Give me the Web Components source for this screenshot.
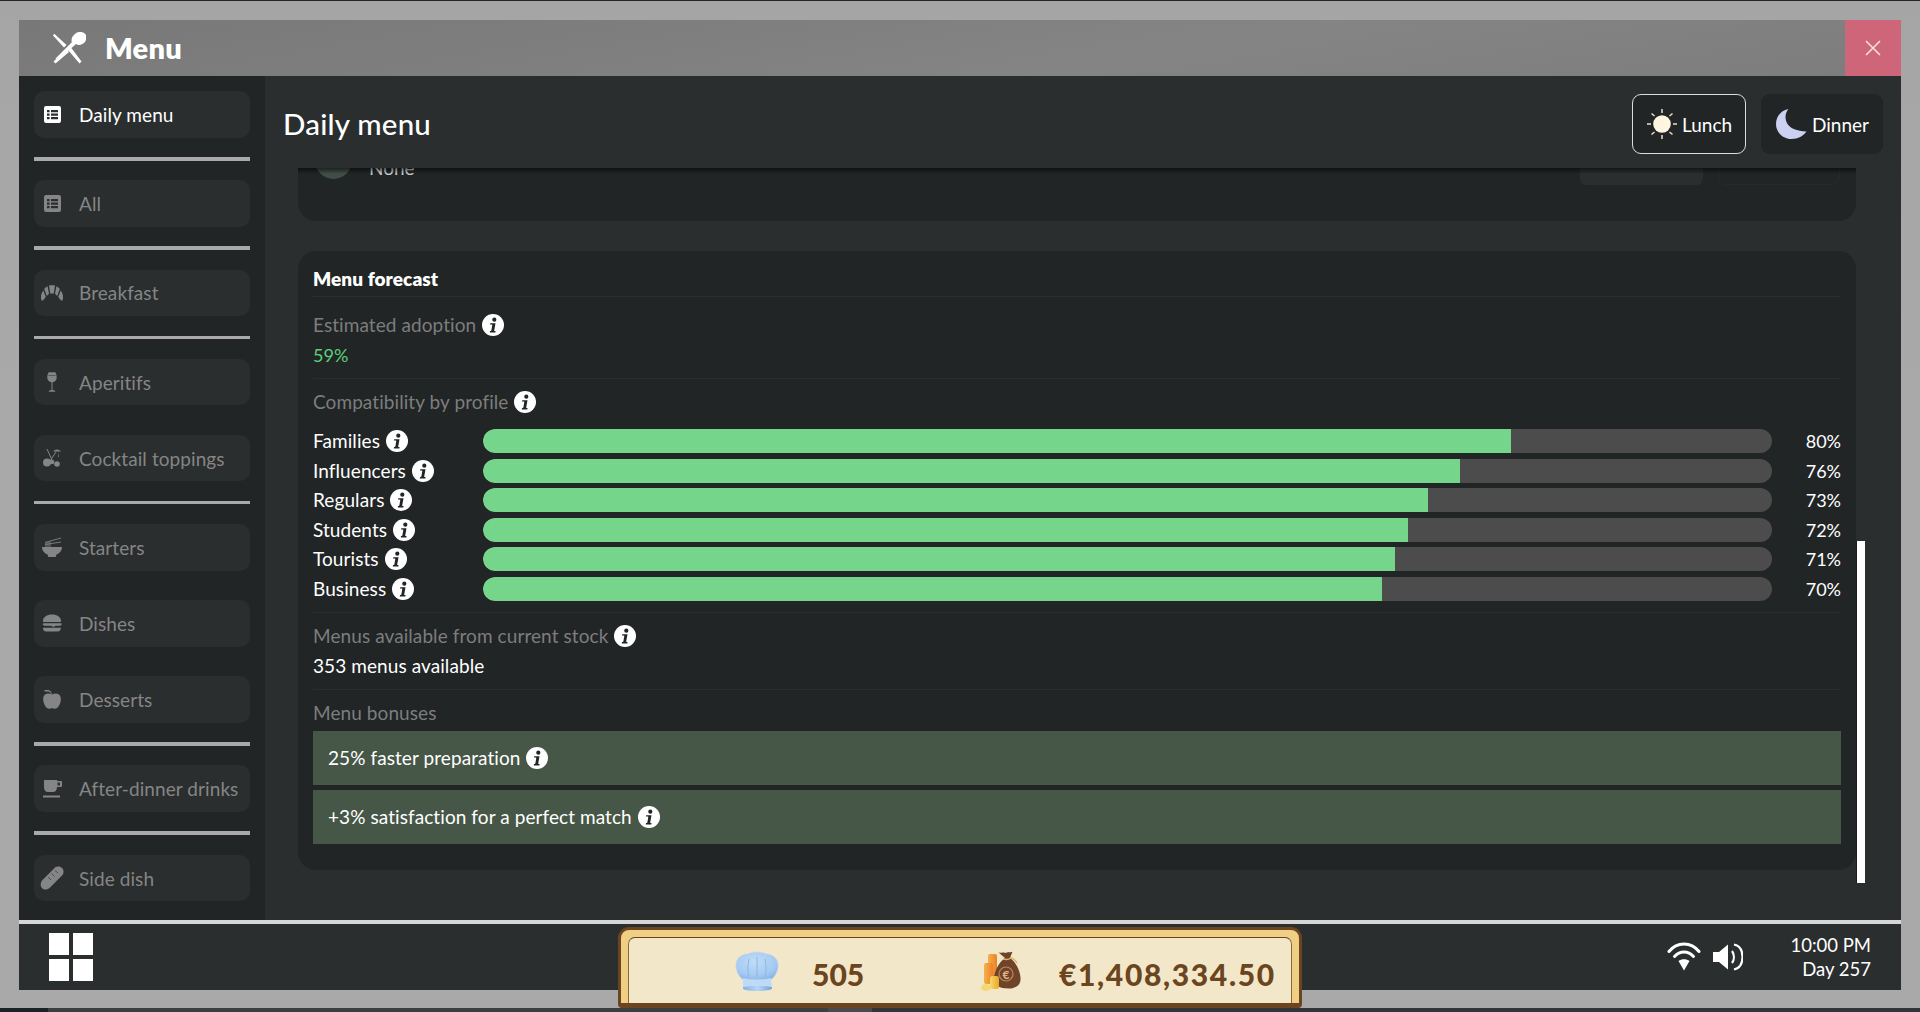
<!DOCTYPE html>
<html lang="en"><head><meta charset="utf-8"><title>Menu</title>
<style>
html,body{margin:0;padding:0;height:1012px;overflow:hidden;background:#a9a9a9;font-family:Lato,"Noto Sans",sans-serif}
</style></head>
<body>
<rk-app>
  <rk-window>
    <rk-titlebar slot="title" heading="Menu"></rk-titlebar>
    <rk-sidebar slot="side">
      <rk-nav icon="list" active>Daily menu</rk-nav><rk-sep></rk-sep>
      <rk-nav icon="list">All</rk-nav><rk-sep></rk-sep>
      <rk-nav icon="croissant">Breakfast</rk-nav><rk-sep></rk-sep>
      <rk-nav icon="wine">Aperitifs</rk-nav>
      <rk-nav icon="cocktail" class="gap">Cocktail toppings</rk-nav><rk-sep></rk-sep>
      <rk-nav icon="bowl">Starters</rk-nav>
      <rk-nav icon="burger" class="gap">Dishes</rk-nav>
      <rk-nav icon="apple" class="gap">Desserts</rk-nav><rk-sep></rk-sep>
      <rk-nav icon="coffee">After-dinner drinks</rk-nav><rk-sep></rk-sep>
      <rk-nav icon="bread">Side dish</rk-nav>
    </rk-sidebar>
    <rk-mainhead slot="head" heading="Daily menu"></rk-mainhead>
    <rk-scroll slot="body">
      <rk-prevcard></rk-prevcard>
      <rk-card heading="Menu forecast">
        <rk-stat label="Estimated adoption" info><span style="color:#5ccf7c;font-size:18px;letter-spacing:0">59%</span></rk-stat>
        <rk-stat label="Compatibility by profile" info class="bars">
          <rk-bar name="Families" value="80" fill="79.75"></rk-bar>
          <rk-bar name="Influencers" value="76" fill="75.8"></rk-bar>
          <rk-bar name="Regulars" value="73" fill="73.3"></rk-bar>
          <rk-bar name="Students" value="72" fill="71.75"></rk-bar>
          <rk-bar name="Tourists" value="71" fill="70.75"></rk-bar>
          <rk-bar name="Business" value="70" fill="69.75"></rk-bar>
        </rk-stat>
        <rk-stat label="Menus available from current stock" info>353 menus available</rk-stat>
        <rk-stat label="Menu bonuses" class="bonuses" last>
          <rk-bonus>25% faster preparation</rk-bonus>
          <rk-bonus>+3% satisfaction for a perfect match</rk-bonus>
        </rk-stat>
      </rk-card>
    </rk-scroll>
    <rk-taskbar slot="foot"></rk-taskbar>
  </rk-window>
  <rk-resources></rk-resources>
</rk-app>
<script>
const ICONS={
list:'<svg viewBox="0 0 17 17" width="17" height="17"><path fill="currentColor" fill-rule="evenodd" d="M2 0h13a2 2 0 0 1 2 2v13a2 2 0 0 1-2 2H2a2 2 0 0 1-2-2V2a2 2 0 0 1 2-2zM3 4v2.300h2.600V4zM7 4v2.300h7V4zM3 7.500v2.300h2.600V7.500zM7 7.500v2.300h7V7.500zM3 11v2.300h2.600V11zM7 11v2.300h7V11z"/></svg>',
croissant:'<svg viewBox="0 0 24 18" width="24" height="18"><g fill="currentColor"><path d="M9 1.500C10.500 1 13.500 1 15 1.500L13.800 9.500H10.200z"/><path d="M7.500 2.200 9 9.800 6.800 12 4.200 5C5 3.800 6.200 2.800 7.500 2.200z"/><path d="M16.500 2.200 15 9.800 17.200 12 19.800 5C19 3.800 17.800 2.800 16.500 2.200z"/><path d="M3.300 6.500 5.800 13 3 16.500H1.500C.3 13 1 9 3.300 6.500z"/><path d="M20.700 6.500 18.200 13 21 16.500h1.500C23.700 13 23 9 20.700 6.500z"/></g></svg>',
wine:'<svg viewBox="0 0 10 20" width="10" height="20"><path fill="currentColor" d="M1.600.3h6.800C9.600 2.500 10 5 9.500 7c-.6 2-2.200 3.200-4 3.300v7.700l2.700.7v1H1.800v-1l2.700-.7v-7.700C2.700 10.200 1.100 9 .5 7 0 5 .4 2.500 1.600.3z"/><rect x="1.300" y="3" width="7.400" height="1" fill="#2a2e2f" opacity=".5"/></svg>',
cocktail:'<svg viewBox="0 0 20 20" width="20" height="20"><g fill="none" stroke="currentColor" stroke-width="1"><path d="M5 1l5 11M14 4L8 13"/></g><g fill="currentColor"><path d="M11 3.500C13 .8 17 .6 19 3.600z"/><path d="M16.500 4l.5 5h-.8z"/><circle cx="5" cy="14.500" r="4"/><circle cx="10" cy="14" r="2.300"/><circle cx="15" cy="16" r="2.800"/></g></svg>',
bowl:'<svg viewBox="0 0 20 20" width="20" height="20"><g fill="none" stroke="currentColor" stroke-width=".9"><path d="M3 5.500 19 1M3 7.500 19 5M4 5v5M6 5v5M8 4.500V10"/></g><path fill="currentColor" d="M0 10h20c0 3.500-2.500 6.500-5.500 7.500l-.8 2.500H6.300l-.8-2.500C2.500 16.500 0 13.500 0 10z"/></svg>',
burger:'<svg viewBox="0 0 20 18" width="20" height="18"><g fill="currentColor"><path d="M1 7C1 3 5 .5 10 .5S19 3 19 7c0 .6-.4 1-1 1H2c-.6 0-1-.4-1-1z"/><path d="M1.500 9.300h17c1 0 1.500.7 1 1.500-.4.600-1 .9-1.800.9h-4.200L11.500 13 9 11.700H2.500C1 11.700 0 9.800 1.500 9.300z"/><path d="M1 13.800h17.800c.3 2-1 3.700-3 3.700H4c-2 0-3.300-1.700-3-3.700z"/></g></svg>',
apple:'<svg viewBox="0 0 18 20" width="18" height="20"><g fill="currentColor"><path d="M9 5.500C11 4.300 14 4 16 5.500c2.200 1.800 2.300 5.500 1 9-1 2.800-2.800 5.300-5 5.300-1.200 0-2-.6-3-.6s-1.800.6-3 .6c-2.200 0-4-2.500-5-5.300C-.3 11-.2 7.300 2 5.500 4 4 7 4.300 9 5.500z"/><path d="M1.500 1h4L8 2.500 8.800 5 8 5.200 7.300 3.200 5.300 2.500H1.500z"/></g></svg>',
coffee:'<svg viewBox="0 0 19 18" width="19" height="18"><path fill="currentColor" fill-rule="evenodd" d="M1 0h13v1h4a1 1 0 0 1 1 1v4a1 1 0 0 1-1 1h-4c0 3-1.500 5-4 5H5c-2.500 0-4-2-4-5zM14.500 2.500v3h2.500v-3zM0 15.500h17V17.500H0z"/></svg>',
bread:'<svg viewBox="0 0 24 24" width="24" height="24"><path fill="currentColor" d="M15.500 1c2-.8 4.500-.7 6.500 1 2 2 2 5 .5 7L10 21.500c-2.500 2.500-6 2.800-8 .5-2-2-1.700-5.500.5-8z"/><g stroke="#2a2e2f" stroke-width="1" fill="none"><path d="M8 11l3 3M11.500 7.500l3 3M15 4.500l3 2.500" opacity=".6"/></g></svg>',
info:'<svg viewBox="0 0 22 22" width="22" height="22"><circle cx="11" cy="11" r="11" fill="#fff"/><g fill="#212526"><circle cx="12.300" cy="5.700" r="2.100"/><path d="M8.200 9.200h5.300l-1.300 7.200c-.1.500.2.700 1.300.6l-.1 1.400H7.800l.2-1.400c1 0 1.300-.1 1.400-.7l.9-5.200c.1-.5-.3-.6-2.300-.6z"/></g></svg>'
};
function def(name,html){
  customElements.define(name,class extends HTMLElement{
    constructor(){super();this.attachShadow({mode:'open'});}
    connectedCallback(){const g=k=>this.getAttribute(k)??'';this.shadowRoot.innerHTML=typeof html==='function'?html(g,this):html;}
  });
}
def('rk-app',`<style>:host{display:block;position:relative;width:1920px;height:1012px;box-sizing:border-box;padding:20px 19px 0;background:linear-gradient(#a5a5a5,#a9a9a9 40%,#a9a9a9);color:#fff;font-family:Lato,"Noto Sans",sans-serif;overflow:hidden}
:host::before{content:"";position:absolute;left:0;right:0;top:0;height:1px;background:#20262a}
:host::after{content:"";position:absolute;left:0;right:0;bottom:0;height:4px;background:linear-gradient(90deg,#1b2226 0 48px,#3a3f42 48px 828px,#4a4a4a 828px 872px,#2f3538 872px)}</style><slot></slot>`);
def('rk-window',`<style>:host{display:grid;width:1882px;height:970px;grid-template-columns:246px 1fr;grid-template-rows:56px 92px 1fr 70px;background:#2a2e2f}
::slotted([slot=title]){grid-column:1/3;grid-row:1}
::slotted([slot=side]){grid-column:1;grid-row:2/4}
::slotted([slot=head]){grid-column:2;grid-row:2}
::slotted([slot=body]){grid-column:2;grid-row:3}
::slotted([slot=foot]){grid-column:1/3;grid-row:4}</style>
<slot name="title"></slot><slot name="side"></slot><slot name="head"></slot><slot name="body"></slot><slot name="foot"></slot>`);
def('rk-titlebar',g=>`<style>:host{display:flex;align-items:center;background:linear-gradient(170deg,#787878,#848484 60%,#7d7d7d)}
svg{margin-left:33px;flex:none}
h1{margin:0 0 0 19px;font:800 29px/56px Lato,"Noto Sans",sans-serif;color:#fff;flex:1;letter-spacing:.2px}
.x{width:56px;height:56px;background:#cf6578;display:flex;align-items:center;justify-content:center}</style>
<svg width="34" height="32" viewBox="0 0 34 32"><g fill="#fff"><path d="M2.300 1.800 1 3.500 12 15.500 14.500 13z"/><path d="M14.500 17.500 1.500 29.500 3.500 31.500 17 20z"/><path d="M19 15.500 29.500 29.500 27.500 31.500 16 18z"/><path d="M22.500 1.500c3-2.200 7.500-1.800 9.500.2s2 6-.5 8.800c-2.700 2.700-6 3-8.500 1.500L4.500 28.500l-2-2L18.800 10.300C17.800 7 19.500 3.500 22.500 1.500z" transform="translate(1 0)"/></g></svg>
<h1>${g('heading')}</h1>
<div class="x"><svg style="margin:0" width="16" height="16" viewBox="0 0 16 16"><path d="M1 1 15 15M15 1 1 15" stroke="#f2e6e8" stroke-width="1.500" fill="none"/></svg></div>`);
def('rk-sidebar',`<style>:host{display:flex;flex-direction:column;background:#212526;padding:15px 15px 0;box-sizing:border-box}
::slotted(rk-nav.gap){margin-top:29.500px}</style><slot></slot>`);
def('rk-nav',(g,el)=>`<style>:host{display:flex;align-items:center;height:46.500px;flex:none;background:#2a2e2f;border-radius:10px;color:${el.hasAttribute('active')?'#fff':'#858585'};font-size:19px;letter-spacing:.08px;white-space:nowrap}
.i{width:36px;display:flex;justify-content:center;flex:none;margin-right:9px}</style>
<span class="i">${ICONS[g('icon')]}</span><slot></slot>`);
def('rk-sep',`<style>:host{display:block;height:3.500px;background:#a9a9a9;margin:19.500px 0 19.800px;flex:none}</style>`);
def('rk-mainhead',g=>`<style>:host{display:flex;align-items:center;padding:4px 18px 0;background:#2a2e2f;gap:15px}
h2{margin:0;font:500 29.500px/1 Lato,"Noto Sans",sans-serif;flex:1;color:#fff;letter-spacing:.2px}
.b{height:60px;box-sizing:border-box;border-radius:9px;background:#212526;display:flex;align-items:center;font-size:19px;color:#fff}
.l{width:114px;border:1px solid #ddd;padding-left:14px;gap:5px}.d{width:122px;padding-left:15px;gap:5px}</style>
<h2>${g('heading')}</h2>
<div class="b l"><svg width="30" height="30" viewBox="0 0 30 30"><circle cx="15" cy="15" r="8.800" fill="#fff5e0"/><path d="M15 0v4M15 26v4M0 15h4M26 15h4M4.500 4.500l3 2.500M25.500 4.500l-3 2.500M4.500 25.500l3-2.500M25.500 25.500l-3-2.500" stroke="#ece0c4" stroke-width="1.500"/></svg>Lunch</div>
<div class="b d"><svg width="31" height="30" viewBox="0 0 31 30"><path fill="#ccd1f1" d="M12.500 0C9 4 8.500 10 11.500 15c3 4.500 9 7 19 7.500C27.500 27 22 30 15.500 30 7 30 0 23.500 0 15 0 7.500 5 1.500 12.500 0z"/></svg>Dinner</div>`);
def('rk-scroll',`<style>:host{display:block;position:relative;overflow:hidden;background:#2a2e2f;padding:0 45px 0 33px}
.in{margin-top:-67px}
.sh{position:absolute;left:33px;right:45px;top:0;height:6px;background:linear-gradient(rgba(0,0,0,.55),rgba(0,0,0,0))}
.track{position:absolute;left:1592px;top:373px;width:8px;height:342px;background:#fff;box-shadow:-1px 0 0 #1b1e1f}</style>
<div class="in"><slot></slot></div><div class="sh"></div><div class="track"></div>`);
def('rk-prevcard',`<style>:host{display:block;position:relative;height:120px;background:#212526;border-radius:18px;margin-bottom:30px}
.c{position:absolute;left:17px;top:41px;width:37px;height:37px;border-radius:50%;background:#414e45}
.n{position:absolute;left:71px;top:56px;color:#ccc;font-size:19px;line-height:22px}
.a{position:absolute;left:1282px;top:47px;width:123px;height:37px;border-radius:6px;background:#2a2e2f}
.o{position:absolute;left:1420px;top:47px;width:122px;height:37px;border-radius:8px;border:1px solid #262a2b;box-sizing:border-box}</style>
<div class="c"></div><div class="n">None</div><div class="a"></div><div class="o"></div>`);
def('rk-card',g=>`<style>:host{display:block;background:#212526;border-radius:18px;padding:15px 15px 26px;height:619px;box-sizing:border-box;font-size:19px;letter-spacing:.08px}
h3{margin:0 0 4.500px;font:800 19px/25px Lato,"Noto Sans",sans-serif;color:#fff;border-bottom:1px solid #2a2e2f;height:31px;box-sizing:border-box}</style>
<h3>${g('heading')}</h3><slot></slot>`);
def('rk-stat',(g,el)=>`<style>:host{display:block;padding:11px 0;${el.hasAttribute('last')?'padding-bottom:0;':'border-bottom:1px solid #2a2e2f;'}line-height:24px;color:#fff}
.lb{display:flex;align-items:center;gap:6px;color:#7d7d7d;height:24px}
.v{margin-top:${el.classList.contains('bars')?'15px':el.classList.contains('bonuses')?'6px':'6.500px'};${el.classList.contains('bars')||el.classList.contains('bonuses')?'display:flex;flex-direction:column;gap:'+(el.classList.contains('bars')?'5.500px':'5px')+';':''}}
svg{flex:none}</style>
<div class="lb"><span>${g('label')}</span>${el.hasAttribute('info')?ICONS.info:''}</div><div class="v"><slot></slot></div>`);
def('rk-bar',g=>`<style>:host{display:grid;grid-template-columns:170px 1289px 69px;align-items:center;height:24px;color:#fff}
.n{display:flex;align-items:center;gap:6px}
.t{height:24px;border-radius:12px;background:#4c4c4c;overflow:hidden}
.f{height:100%;background:#75d58b;border-radius:12px 0 0 12px;width:${g('fill')}%}
.p{text-align:right;font-size:18px;letter-spacing:0}</style>
<div class="n"><span>${g('name')}</span>${ICONS.info}</div><div class="t"><div class="f"></div></div><div class="p">${g('value')}%</div>`);
def('rk-bonus',`<style>:host{display:flex;align-items:center;gap:6px;height:54px;padding-left:15px;background:#475747;color:#fff}</style><span><slot></slot></span>${ICONS.info}`);
def('rk-taskbar',`<style>:host{display:flex;align-items:center;box-sizing:border-box;border-top:4px solid #d6d6d6;background:#2a2e2f;padding:0 30px;height:70px}
.w{display:grid;grid-template-columns:20px 20px;grid-template-rows:22px 22px;gap:4px}
.w i{background:#fff;display:block}
.sp{flex:1}
.t{text-align:right;font-size:18.500px;line-height:24px;color:#fff;margin-left:25px;width:103px}
svg{display:block}</style>
<div class="w"><i></i><i></i><i></i><i></i></div><div class="sp"></div>
<svg width="34" height="30" viewBox="0 0 34 30" style="margin-right:12px"><g fill="none" stroke="#fff" stroke-width="3" stroke-linecap="round"><path d="M2 9.500C10-.5 24-.5 32 9.500"/><path d="M7.500 14.500c5.500-6 13.500-6 19 0"/></g><path fill="#fff" d="M11.500 19c3-2.500 8-2.500 11 0L17 28.500z"/></svg>
<svg width="30" height="28" viewBox="0 0 30 28"><path fill="#fff" d="M0 9h6l9-7.500v25L6 19H0z"/><g fill="none" stroke="#fff" stroke-width="2.200"><path d="M19 8c2.500 3.500 2.500 8.500 0 12"/><path d="M21 1.500c7.500 1.500 8.500 7 8.500 12.500S27.500 25 21 26.500"/></g></svg>
<div class="t">10:00 PM<br>Day 257</div>`);
def('rk-resources',`<style>:host{position:absolute;left:618px;top:927px;width:684px;height:81px;box-sizing:border-box;border:3px solid #6b4420;border-bottom-width:5px;border-radius:11px 11px 4px 4px;background:#f0cf85;padding:7px 7px 0}
.p{position:relative;height:66px;box-sizing:border-box;background:#f3e7c9;border-top:1.500px solid #6b4420;border-left:1px solid #8a6a3a;border-right:1px solid #8a6a3a;border-radius:7px 7px 0 0;color:#6b4420;font:900 30px/1 Lato,"Noto Sans",sans-serif}
span,svg{position:absolute}
span{top:21px}</style>
<div class="p">
<svg style="left:106px;top:13px" width="44" height="41" viewBox="0 0 44 41"><defs><radialGradient id="h" cx=".45" cy=".35" r=".7"><stop offset="0" stop-color="#c2dcf8"/><stop offset=".7" stop-color="#a5caf2"/><stop offset="1" stop-color="#88b4e8"/></radialGradient><linearGradient id="b" x1="0" x2="1"><stop offset="0" stop-color="#7fb0e6"/><stop offset=".5" stop-color="#b8d6f5"/><stop offset="1" stop-color="#6fa4de"/></linearGradient></defs><path fill="url(#h)" stroke="#e2e2d8" stroke-width=".8" d="M8 29C3 25 .3 19 .7 13 1.500 6 8 2.500 13 2.500 17 .3 27 .3 31 2.500 36 2.500 42.500 6 43.300 13 43.700 19 41 25 36 29z"/><g fill="none" stroke="#8cb6e6" stroke-width="1"><path d="M14 8c-1.500 6-1.500 12 0 18M22 6v20M30 8c1.500 6 1.500 12 0 18"/></g><path fill="#bfdaf6" d="M8 27c8 2.500 20 2.500 28 0l1 11H8z"/><path fill="url(#b)" d="M8 36c7-1.500 22-1.500 29 0 0 1.500-.5 2-1 2.500-7 2-20 2-27 0-.5-.5-1-1-1-2.500z"/></svg>
<span style="left:183px">505</span>
<svg style="left:351px;top:13px" width="42" height="41" viewBox="0 0 42 41"><defs><linearGradient id="c1" x1="0" x2="1"><stop offset="0" stop-color="#f7b04a"/><stop offset="1" stop-color="#e9812a"/></linearGradient><linearGradient id="c2" x1="0" x2="1"><stop offset="0" stop-color="#f9d863"/><stop offset="1" stop-color="#e8a92c"/></linearGradient></defs><rect x="8" y="3" width="9" height="24" rx="2" fill="url(#c1)"/><rect x="4" y="12" width="9" height="21" rx="2" fill="url(#c1)"/><path fill="#6f4428" d="M18 1c2 1.200 3.500 1 5 .2 1.500.9 3.500.9 5-.2 1.500.3 3.500.4 4.500-.2L30 7c7 5 11 15 10.500 22-.4 6-6 8.500-12 8.500-9 0-14-3-14.500-8.500-.4-7 4-17 11-22z"/><path d="M23 8c3 .8 6 .4 8-1 2 0 5 3 6 5" stroke="#d8b56c" stroke-width="1.400" fill="none"/><circle cx="26" cy="23" r="7" fill="none" stroke="#b98b62" stroke-width="1.200"/><text x="26" y="27.500" text-anchor="middle" font-family="Lato" font-size="12" font-weight="700" fill="#e0b48a">€</text><rect x="10" y="25" width="9" height="13" rx="2.500" fill="url(#c2)"/><ellipse cx="6" cy="36.500" rx="5" ry="3.500" fill="#f4d878"/></svg>
<span style="left:430px;letter-spacing:1.650px">€1,408,334.50</span>
</div>`);
</script>
</body></html>
